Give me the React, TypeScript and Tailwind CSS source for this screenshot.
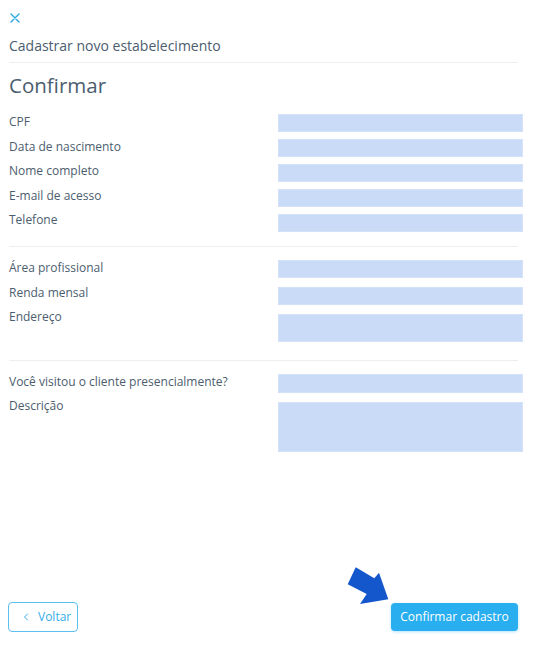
import { ChevronLeft } from 'lucide-react'

interface Field {
  label: string
  height: string
}

interface Section {
  labelGap: string
  boxGap: string
  fields: Field[]
}

const sections: Section[] = [
  {
    labelGap: 'gap-[8.5px]',
    boxGap: 'gap-[7px]',
    fields: [
      { label: 'CPF', height: 'h-[18px]' },
      { label: 'Data de nascimento', height: 'h-[18px]' },
      { label: 'Nome completo', height: 'h-[18px]' },
      { label: 'E-mail de acesso', height: 'h-[18px]' },
      { label: 'Telefone', height: 'h-[18px]' },
    ],
  },
  {
    labelGap: 'gap-[8.7px]',
    boxGap: 'gap-[9px]',
    fields: [
      { label: 'Área profissional', height: 'h-[18px]' },
      { label: 'Renda mensal', height: 'h-[18px]' },
      { label: 'Endereço', height: 'h-[28px]' },
    ],
  },
  {
    labelGap: 'gap-[7.5px]',
    boxGap: 'gap-[9px]',
    fields: [
      { label: 'Você visitou o cliente presencialmente?', height: 'h-[19px]' },
      { label: 'Descrição', height: 'h-[50px]' },
    ],
  },
]

export default function App() {
  return (
    <div
      className="relative flex h-[645px] w-[535px] flex-col bg-white"
      style={{ fontFamily: '"Open Sans", "Noto Sans", sans-serif' }}
    >
      <div className="flex flex-col pl-[9px]">
        <button className="mt-[13px] ml-[1px] h-[10px] w-[10px]">
          <svg width="10" height="10" viewBox="0 0 10 10" className="text-[#29a8e6]">
            <path d="M1 1 9 9M9 1 1 9" stroke="currentColor" strokeWidth="1.4" strokeLinecap="round" />
          </svg>
        </button>

        <h2 className="mt-[13px] text-[14px] leading-[20px] text-[#4b5d6e]">
          Cadastrar novo estabelecimento
        </h2>
        <div className="mt-[6px] h-px w-[509px] bg-[#eceef1]" />

        <h1 className="mt-[8px] text-[20.5px] leading-[28px] text-[#4b5d6e]">Confirmar</h1>

        <div className="mt-[15px] flex flex-col">
          {sections.map((section, i) => (
            <div key={i} className="flex flex-col">
              {i > 0 && (
                <div
                  className={`${i === 1 ? 'mt-[14px]' : 'mt-[18px]'} mb-[13px] h-px w-[509px] bg-[#eceef1]`}
                />
              )}
              <div className="grid grid-cols-[269px_245px]">
                <div className={`flex flex-col ${section.labelGap}`}>
                  {section.fields.map((f) => (
                    <span key={f.label} className="text-[12px] leading-[16px] text-[#4b5d6e]">
                      {f.label}
                    </span>
                  ))}
                </div>
                <div className={`flex flex-col ${section.boxGap}`}>
                  {section.fields.map((f) => (
                    <div key={f.label} className={`${f.height} border border-[#d3e2f8] bg-[#c9dbf7]`} />
                  ))}
                </div>
              </div>
            </div>
          ))}
        </div>
      </div>

      <div className="mt-auto flex items-center justify-between pb-[13px] pl-[8px] pr-[17px]">
        <button className="flex h-[30px] w-[70px] items-center rounded-[4px] border border-[#5cbff0] pl-[11px] text-[12px] font-medium text-[#34ade9]">
          <ChevronLeft size={12} strokeWidth={2} />
          <span className="ml-[6px]">Voltar</span>
        </button>
        <button className="h-[28px] w-[127px] rounded-[4px] bg-[#29aef0] text-[12px] font-medium text-white shadow-[0_1px_3px_rgba(41,174,240,0.35)]">
          Confirmar cadastro
        </button>
      </div>

      <svg
        className="pointer-events-none absolute left-0 top-0"
        width="535"
        height="645"
        viewBox="0 0 535 645"
      >
        <polygon
          points="355.7,567.3 374.3,578.3 379,572.7 388.3,599.3 360,604 366.7,594 347.7,584.3"
          fill="#1456cc"
        />
      </svg>
    </div>
  )
}
